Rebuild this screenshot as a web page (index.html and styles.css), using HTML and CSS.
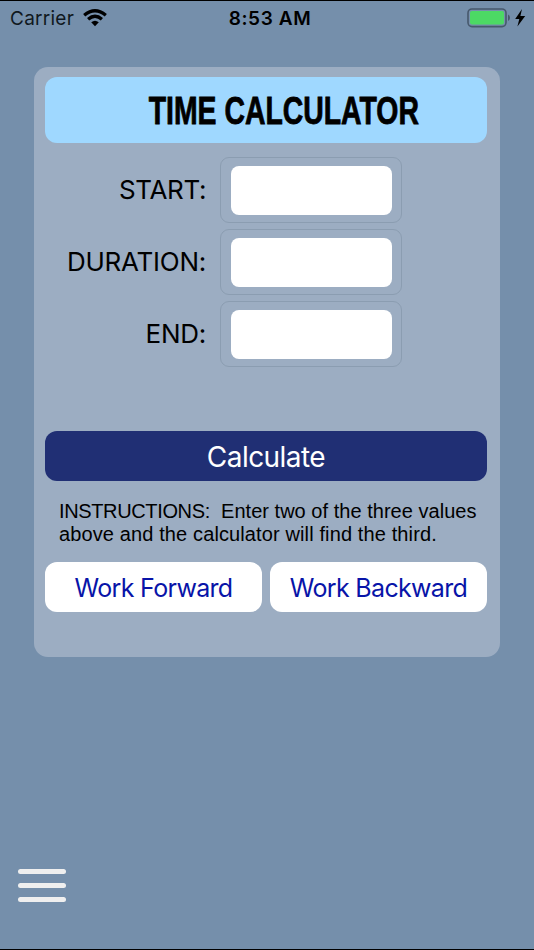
FILE: index.html
```html
<!DOCTYPE html>
<html lang="en">
<head>
<meta charset="utf-8">
<title>Time Calculator</title>
<link rel="stylesheet" href="styles.css">
</head>
<body>
<header class="status">
  <div class="carrier"><span class="carrier-name">Carrier</span>
    <svg class="wifi" width="24" height="18" viewBox="0 0 24 18" aria-hidden="true">
      <g fill="none" stroke="#000" stroke-width="3.3"><path d="M1.2 6.3Q12 -2.8 22.8 6.3"/><path d="M5.1 10.3Q12 4.3 18.9 10.3"/></g>
      <path d="M8.2 13.3Q12 10.1 15.8 13.3L12 17.2Z"/>
    </svg>
  </div>
  <span class="clock">8:53 AM</span>
  <div class="power">
    <svg width="60" height="20" viewBox="0 0 60 20" aria-hidden="true">
      <rect x="1" y="1" width="38" height="17.6" rx="4" fill="none" stroke="#47586c" stroke-width="1.6"/>
      <rect x="3" y="3" width="34" height="13.6" rx="2" fill="#4cd964"/>
      <path d="M41 6.5Q43 7.5 43 9.8T41 13Z" fill="#47586c"/>
      <path d="M55 1L48.2 10.9H52.3L50.4 18.6L58.2 7.9H53.4Z"/>
    </svg>
  </div>
</header>
<main class="panel">
  <h1 class="title"><span class="title-text">TIME CALCULATOR</span></h1>
  <form class="fields">
    <label class="row"><span class="label start">START:</span><span class="frame"><input class="input" type="text"></span></label>
    <label class="row"><span class="label">DURATION:</span><span class="frame"><input class="input" type="text"></span></label>
    <label class="row"><span class="label">END:</span><span class="frame"><input class="input" type="text"></span></label>
  </form>
  <button class="button calculate"><span>Calculate</span></button>
  <p class="instructions"><span class="lead">INSTRUCTIONS:</span>&nbsp; <span class="line-one">Enter two of the three values</span><br><span class="line-two">above and the calculator will find the third.</span></p>
  <div class="actions">
    <button class="button work"><span>Work Forward</span></button>
    <button class="button work"><span>Work Backward</span></button>
  </div>
</main>
<nav class="menu" aria-label="Menu"><i class="bar"></i><i class="bar"></i><i class="bar"></i></nav>
</body>
</html>
```
FILE: styles.css
```css
* { box-sizing: border-box; }
body {
  margin: 0;
  height: 950px;
  display: flex;
  flex-direction: column;
  overflow: hidden;
  background: #758fab;
  border-top: 1px solid #000;
  border-bottom: 1px solid #000;
  font-family: Inter, "Liberation Sans", sans-serif;
  color: #000;
}
.status {
  height: 66px;
  display: grid;
  grid-template-columns: 1fr auto 1fr;
  align-items: start;
  padding: 7px 7px 0 10px;
  font-size: 19px;
  line-height: 22px;
}
.carrier { display: flex; gap: 9px; color: #101820; letter-spacing: 0.25px; }
.wifi { margin-top: 1px; }
.clock { font-weight: 600; letter-spacing: 0.6px; padding-left: 3px; }
.power { display: flex; justify-content: flex-end; }
.panel {
  width: 466px;
  height: 590px;
  margin-left: 34px;
  padding: 10px 13px 0 11px;
  border-radius: 14px;
  background: #9cadc2;
}
.title {
  height: 66px;
  margin: 0;
  padding: 2px 0 0 36px;
  display: flex;
  align-items: center;
  justify-content: center;
  border-radius: 12px;
  background: #9fd8ff;
  font: bold 38px/66px "Liberation Sans", sans-serif;
  white-space: nowrap;
}
.title-text { flex: none; transform: scaleX(0.747); -webkit-text-stroke: 0.8px #000; }
.fields { margin: 14px 0 0; display: grid; gap: 6px; }
.row { height: 66px; display: grid; grid-template-columns: 161px 182px; column-gap: 14px; align-items: center; }
.label { font-size: 26px; line-height: 32px; letter-spacing: -0.25px; text-align: right; }
.start { letter-spacing: -0.4px; }
.frame { height: 66px; padding: 8px 10px; border: 1px solid #8b9db1; border-radius: 9px; }
.input { display: block; width: 161px; height: 49px; padding: 0 8px; border: 0; border-radius: 8px; background: #fff; font: 24px Inter, sans-serif; outline: 0; }
.button { display: flex; align-items: center; justify-content: center; padding: 0; border: 0; border-radius: 12px; font-family: Inter, sans-serif; white-space: nowrap; }
.calculate { width: 442px; height: 50px; margin-top: 64px; padding-top: 1px; background: #202f74; color: #fff; font-size: 28px; letter-spacing: -0.55px; }
.instructions { margin: 19px 0 0 14px; font: 20px/23px "Liberation Sans", sans-serif; white-space: nowrap; }
.lead { letter-spacing: -0.36px; }
.line-one { letter-spacing: 0.03px; }
.line-two { letter-spacing: 0.12px; }
.actions { display: grid; grid-template-columns: 217px 217px; gap: 8px; margin-top: 16px; }
.work { height: 50px; padding-top: 1px; background: #fff; color: #0814a8; font-size: 25px; letter-spacing: -0.68px; }
.menu { width: 48px; margin: 212px 0 0 17.5px; display: grid; gap: 9px; }
.bar { height: 5px; border-radius: 3px; background: #efefef; }
```
